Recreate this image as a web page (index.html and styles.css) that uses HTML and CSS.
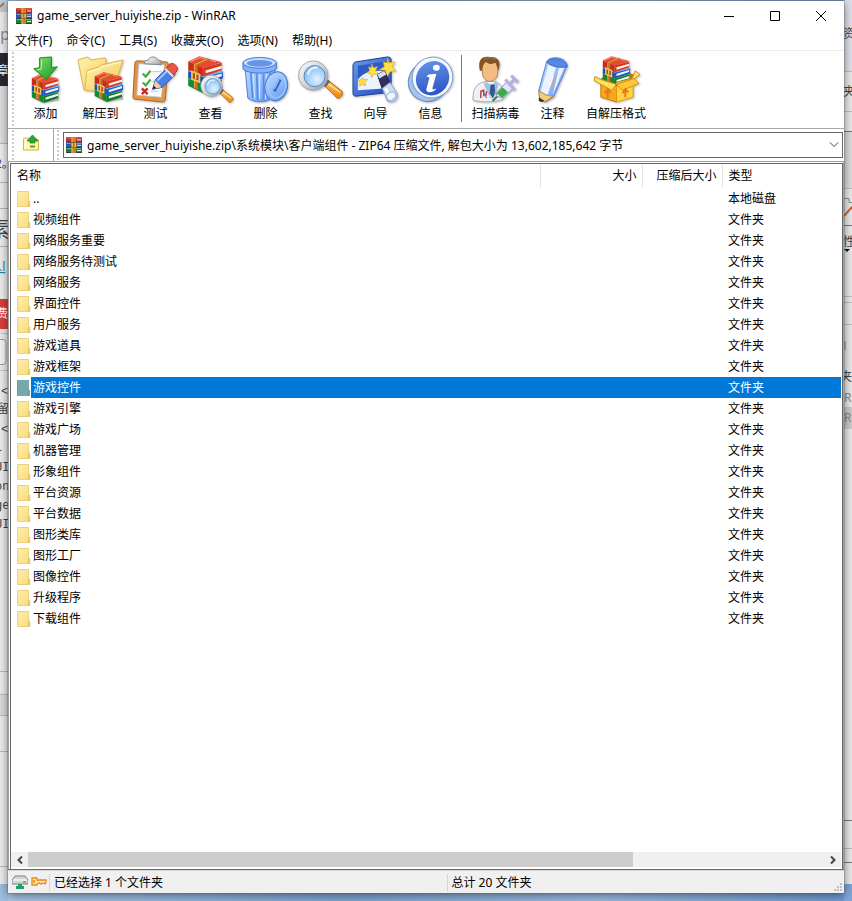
FILE: index.html
```html
<!DOCTYPE html>
<html lang="zh-CN">
<head>
<meta charset="utf-8">
<title>game_server_huiyishe.zip - WinRAR</title>
<link rel="stylesheet" href="styles.css">
</head>
<body>
<svg class="defs" aria-hidden="true">
  <defs>
    <linearGradient id="gBlue" x1="0" y1="0" x2="1" y2="1"><stop offset="0" stop-color="#c3dcff"/><stop offset=".5" stop-color="#8fbcfd"/><stop offset="1" stop-color="#5f90f0"/></linearGradient>
    <linearGradient id="gDeep" x1="0" y1="0" x2="1" y2="1"><stop offset="0" stop-color="#6c9bf0"/><stop offset="1" stop-color="#2148bb"/></linearGradient>
    <linearGradient id="gYellow" x1="0" y1="0" x2="1" y2="1"><stop offset="0" stop-color="#fff3ae"/><stop offset="1" stop-color="#f5c95a"/></linearGradient>
    <linearGradient id="gGreen" x1="0" y1="0" x2="1" y2="1"><stop offset="0" stop-color="#8ae66c"/><stop offset="1" stop-color="#149320"/></linearGradient>
    <linearGradient id="gOrange" x1="0" y1="0" x2="0" y2="1"><stop offset="0" stop-color="#ffc05a"/><stop offset="1" stop-color="#f08410"/></linearGradient>
    <linearGradient id="gSteel" x1="0" y1="0" x2="1" y2="1"><stop offset="0" stop-color="#ffffff"/><stop offset=".5" stop-color="#d3d5da"/><stop offset="1" stop-color="#94989e"/></linearGradient>
    <radialGradient id="gLens" cx=".6" cy=".65" r=".7"><stop offset="0" stop-color="#e0f3ff"/><stop offset="1" stop-color="#7cb8f0"/></radialGradient>
    <linearGradient id="gFolder" x1="0" y1="0" x2="1" y2="1"><stop offset="0" stop-color="#fdedb0"/><stop offset="1" stop-color="#fbdc74"/></linearGradient>
  </defs>

  <symbol id="winrar" viewBox="0 0 16 16">
    <rect x="0" y="0" width="16" height="5.4" rx="1" fill="#c2301f"/><path d="M1 1h14" stroke="#f06a58"/><path d="M11 3h4" stroke="#f8e8e4"/>
    <rect x="0" y="5.3" width="16" height="5.4" rx="1" fill="#2a55b8"/><path d="M1 6.3h14" stroke="#84b1f2"/><path d="M11 8.3h4" stroke="#e7efff"/>
    <rect x="0" y="10.6" width="16" height="5.4" rx="1" fill="#1b7d2d"/><path d="M1 11.6h14" stroke="#6fd36d"/><path d="M11 13.6h4" stroke="#e9ffe9"/>
    <path d="M0 5h16M0 10.5h16M0 15.6h16" stroke="#29224a" stroke-width=".8"/>
    <rect x="5.5" y="0" width="4.5" height="16" fill="#d9772a"/><path d="M6 0v16" stroke="#f4b36d"/>
    <rect x="5" y="5.6" width="5.6" height="4.6" fill="#e9c24b" stroke="#77511a" stroke-width=".8"/><path d="M7.8 6v3.4" stroke="#77511a"/>
  </symbol>

  <symbol id="stack" viewBox="0 0 30 30">
    <path d="M2 23l11 6 16-5v4l-16 2z" fill="#000" opacity=".18"/>
    <path d="M1 17l12 5v8L1 24z" fill="#128a34"/><path d="M13 22l15-4v7l-15 5z" fill="#0e7d2b"/><path d="M15 24.4l13-4v2.2l-13 4z" fill="#f4f4ee"/><path d="M1 17.6l12 5 15-4" fill="none" stroke="#5ad569"/>
    <path d="M1 11l12 5v7L1 17.6z" fill="#1c4cb0"/><path d="M13 16l16-4v6l-16 5z" fill="#2456c3"/><path d="M15 18l13-3.8v2.2l-13 4z" fill="#edf3ff"/><path d="M1 11.6l12 5 16-4" fill="none" stroke="#86b8fa"/>
    <path d="M1 4.5l12 5v7L1 11.3z" fill="#c92c1b"/><path d="M13 9.5l15-4v6l-15 5z" fill="#d43823"/><path d="M15 11.6l13-3.8v2.2l-13 4z" fill="#fbf3ec"/>
    <path d="M1 4.5L10 .3l18 4.8-15 4.8z" fill="#e64a33"/><path d="M3 4.4L10.3 1.2l13 3.4" fill="none" stroke="#f99580" stroke-width=".9"/>
    <path d="M16 2l3.7 1L8.8 8v19.6l-3.4-1.8V6.3z" fill="#c96a20"/><path d="M16.5 2.4L6.2 7v18.6" fill="none" stroke="#f2a95b" stroke-width=".8"/>
    <path d="M4 12.5l6 2.4v6l-6-2.4z" fill="#a5541a" stroke="#f5c753" stroke-width="1.4"/><path d="M7 14.500v4" stroke="#ffe79a"/>
  </symbol>

  <symbol id="folder" viewBox="0 0 14 16">
    <path d="M.5.5h11v12h1.200v3H.5z" fill="url(#gFolder)" stroke="#ecd27c"/><path d="M11.300 15.300v-4.100l1.500-1.200v5.300z" fill="#f8df86" stroke="#d6b65c" stroke-width=".6"/>
  </symbol>
  <symbol id="folder-sel" viewBox="0 0 14 16"><path d="M0 0h12v10h1v6H0z" fill="#76a9ae"/><path d="M.5 1v14M11.5 15v-5" stroke="#6898a9" fill="none"/></symbol>

  <symbol id="add" viewBox="0 0 48 48">
    <use href="#stack" x="9" y="18" width="30" height="30"/>
    <path d="M18 2l12-1v11l6-1-11 13-13-11 6-1z" fill="url(#gGreen)" stroke="#148a22"/><path d="M20 3.500l-.5 10-4 .5" fill="none" stroke="#b8f7a2"/>
  </symbol>
  <symbol id="extract" viewBox="0 0 48 48">
    <path d="M1 4l10-3 3 3 15-2 3 20-25 12z" fill="url(#gYellow)" stroke="#dfb348"/>
    <path d="M8 35l2-20 12-4 3-2 22-5-9 29-18 3z" fill="url(#gYellow)" stroke="#dfb348"/><path d="M10 17l13-4 3-2 19-5" fill="none" stroke="#fffbe0"/>
    <use href="#stack" x="17" y="16" width="31" height="31"/>
  </symbol>
  <symbol id="test" viewBox="0 0 48 48">
    <path d="M5 5l30 1c1 0 2 1 2 2l-3 36c0 2-1 3-3 3L3 44c-2 0-2-1-2-3L3 7c0-1 1-2 2-2z" fill="#e29643" stroke="#a8622a"/>
    <path d="M7 8l26 1-3 33-25-2z" fill="#fafcff" stroke="#b8c5d8" stroke-width=".7"/>
    <path d="M13 8V5l4-1c0-4 8-4 9 0l4 1v4z" fill="url(#gSteel)" stroke="#83888f"/>
    <path d="M11 18l3 3 5-6M11 27l3 3 5-6" fill="none" stroke="#46ad36" stroke-width="2.200"/><path d="M10 33l6 6m0-6l-6 6" stroke="#ce2a28" stroke-width="2.500"/>
    <path d="M21 16h9M20 26h5M19 36h8" stroke="#bac8dc"/>
    <path d="M21 34l3-10L37 11l7 8-13 13z" fill="#4a7ee8" stroke="#2b4ea8"/><path d="M26 25l12-12" stroke="#a3c5ff" stroke-width="2"/><path d="M21 34l3-9 6 7z" fill="#f5cda0"/><path d="M21 34l1-4 3 3z" fill="#222"/><path d="M35 13l4-5c3-2 9 3 7 7l-4 5z" fill="#ea5546" stroke="#b93025"/><path d="M34 13l8 8" stroke="#d7e2f3" stroke-width="2"/>
  </symbol>
  <symbol id="glass" viewBox="0 0 48 48">
    <path d="M27 29l5-4 14 11c2 3-2 8-5 7z" fill="url(#gOrange)" stroke="#b8691c"/><path d="M31 28l13 9" stroke="#ffe1a2" stroke-width="1.500"/><path d="M25 29l5-6 4 3-5 6z" fill="#62636b"/>
    <circle cx="16.500" cy="20" r="15" fill="url(#gSteel)" stroke="#a3a7ad"/><circle cx="18" cy="20.500" r="10.800" fill="url(#gLens)" stroke="#5e87b5"/><path d="M11 19c1-5 5-8 10-7" fill="none" stroke="#e9f7ff" stroke-width="2"/>
  </symbol>
  <symbol id="view" viewBox="0 0 48 48">
    <use href="#stack" x="0" y="0" width="38" height="38"/><use href="#glass" x="13" y="16" width="35" height="35"/>
  </symbol>
  <symbol id="bin" viewBox="0 0 48 48">
    <path d="M3 10l3 33c6 5 19 5 25 0l3-33z" fill="url(#gBlue)" stroke="#517edb"/>
    <path d="M9 17l2 26M15 18l1 27M22 18v27M29 17l-2 26" stroke="#5b89df" stroke-width="1.800"/><path d="M11 18l2 25M18 18v26M25 18l-1 26" stroke="#d7e8ff"/>
    <path d="M1 7v6c4 6 30 6 34 0V7z" fill="#83b0f8" stroke="#4374d4"/><ellipse cx="18" cy="7" rx="17" ry="5.500" fill="#c3dcff" stroke="#4374d4"/><ellipse cx="18" cy="7.500" rx="13" ry="3.500" fill="#6794e6"/>
    <ellipse cx="35" cy="31" rx="11.500" ry="15" transform="rotate(12 35 31)" fill="url(#gBlue)" stroke="#4374d4"/><ellipse cx="36" cy="31" rx="8.500" ry="12" transform="rotate(12 36 31)" fill="none" stroke="#aaccff"/><path d="M33 36l6-12" stroke="#3462bd" stroke-width="3"/><path d="M33 34l5-10" stroke="#b6d4ff"/>
  </symbol>
  <symbol id="wizard" viewBox="0 0 48 48">
    <path d="M4 6l32-5c3 0 4 1 4 4v32L4 41c-2 0-3-1-3-3V10c0-2 1-4 3-4z" fill="url(#gDeep)" stroke="#203e9b"/>
    <path d="M6 10l30-5v21L6 32z" fill="#2f5bc4"/><path d="M6 24c8-10 20-10 30-8v17L6 35z" fill="#e9f2ff"/>
    <path d="M36 2l2 5 6-1-3 5 4 4-6 1-3 5-2-6-6-1 5-3-1-5 4 1zM20 8l2 4 4-1-2 4 3 3-5 1-2 3-1-4-4-1 3-2-1-4 3 1zM11 22l1 2h4l-3 3 1 3-4-1-2 2v-4l-2-2 3-1z" fill="#ffdf47" stroke="#dba919" stroke-width=".7"/>
    <path d="M26 19l7-4 6 13-8 6z" fill="#34305b" stroke="#22203d"/><path d="M26 19l7-4 2 4-7 4z" fill="#cfe0f6"/><path d="M31 33l8-6 7 11c2 7-5 11-10 8z" fill="#c9dcf3" stroke="#8ea7cc"/><path d="M34 33l5 8" stroke="#fff" stroke-width="3"/><ellipse cx="40" cy="41" rx="5" ry="4" transform="rotate(-35 40 41)" fill="#edf7ff" stroke="#86a6ce"/>
  </symbol>
  <symbol id="info" viewBox="0 0 48 48">
    <ellipse cx="22" cy="26" rx="21" ry="20" transform="rotate(-35 22 26)" fill="#a3c2ec" stroke="#6288bd"/><ellipse cx="26" cy="22" rx="20.500" ry="21" transform="rotate(35 26 22)" fill="#f4f8ff" stroke="#7ba0d6"/><ellipse cx="26.500" cy="22.500" rx="16.500" ry="18" transform="rotate(35 26 22)" fill="url(#gDeep)"/>
    <ellipse cx="30" cy="12" rx="3.500" ry="3" fill="#fff"/><path d="M22 19l8-1-4 15c0 2 2 1 4 0-2 5-12 6-10 0l3-11-3-1z" fill="#fff"/>
  </symbol>
  <symbol id="virus" viewBox="0 0 48 48">
    <path d="M1 45c0-11 2-16 12-19h10c8 3 10 9 9 18-6 3-23 4-31 1z" fill="#edf0f5" stroke="#a6afba"/><path d="M14 26l6 4 4-4 3 4-6 14-8-13z" fill="#9ac5e8"/><path d="M19 29h4l1 10-3 4-3-5z" fill="#345891"/><path d="M12 27l7 16M27 28l-5 15" stroke="#b0b6c3"/>
    <path d="M10 8c1-8 16-9 17 1l-1 10c-2 8-12 10-15 1z" fill="#f3bc83" stroke="#a46830" stroke-width=".7"/><path d="M8 15C5 1 13 0 18 1c10-1 12 6 9 14l-3-8c-4 2-7 1-10-1-2 2-3 4-4 9z" fill="#845428"/><path d="M12 4c4-3 8-3 12 0" stroke="#ae7640" fill="none"/>
    <path d="M9 43v-7l3-1v6M14 41l1-5" stroke="#bd3944" fill="none" stroke-width="1.500"/><path d="M11 36l4 7" stroke="#4065b6"/>
    <path d="M21 46l8-8" stroke="#48714e" stroke-width="2"/><path d="M25 37l11-11 6 7-10 10-7-2z" fill="#e3e4f7" stroke="#9094bb"/><path d="M25 38l6-6 6 5-6 6z" fill="#3bad43"/><path d="M34 24l10 11M39 28l5-5M40 20l7 7" stroke="#b5aee0" stroke-width="3"/>
  </symbol>
  <symbol id="comment" viewBox="0 0 48 48">
    <path d="M10 35L18 6C21-1 39 1 39 10L25 42l-8 5-6-4z" fill="url(#gBlue)" stroke="#5c82cf"/><path d="M20 8l8 2-9 30-7-4zM31 11l5 1-12 28" fill="#eaf3ff"/><path d="M18 6c5-6 20-3 21 5-5 1-16 1-21-5z" fill="#5689e6" stroke="#3a66c4"/><path d="M27 20l-4 13" stroke="#aeb0ba" stroke-width="3"/><path d="M25 20l-4 12" stroke="#fff"/><path d="M10 35c4 4 9 6 15 6l-9 6-5-3z" fill="#f4ce78" stroke="#c28c35"/><path d="M10 42l6 4-3 1-3-1z" fill="#333"/>
  </symbol>
  <symbol id="sfx" viewBox="0 0 48 48">
    <path d="M8 23l12-8 23 4-3 9-22 4z" fill="#bb7415"/><use href="#stack" x="9" y="0" width="30" height="30"/>
    <path d="M8 24l16 7v16L8 42z" fill="#f4aa1b" stroke="#c57c0d"/><path d="M24 31l17-6v17l-17 5z" fill="#ffd441" stroke="#d8961a"/><path d="M8 24l16 5-5 6L1 25l1-4zM24 29l17-5 7-5-5-4-3 8-16 4z" fill="#ffe25c" stroke="#d28f18"/><path d="M24 29l18-6 5 5-17 7z" fill="#ffc638" stroke="#d28f18"/><path d="M15 43v-8m-3 3l3-4 3 4M33 42v-7m-3 3l3-4 3 3" stroke="#ef731b" stroke-width="2" fill="none"/>
  </symbol>
</svg>

<div class="desktop">
  <svg class="edge" aria-hidden="true">
    <rect width="8" height="901" fill="#ececee"/><rect y="0" width="8" height="12" fill="#b6cfd8"/><path d="M0 7l4-4" stroke="#d66b3b" stroke-width="2"/>
    <text x="0" y="40" class="edge-mid edge-grey">p</text>
    <rect y="53" width="8" height="33" fill="#292a31"/><text x="-3" y="75" class="edge-white">章</text>
    <rect y="86" width="8" height="57" fill="#dedee0"/><path d="M0 143.500h8M0 182.500h8M0 208.500h8M0 246.500h8" stroke="#b5b5b5"/>
    <text x="-5" y="168">2。</text><text x="-12" y="237" class="edge-big">素</text><text x="-1" y="271" class="edge-link">.l</text>
    <rect y="299" width="8" height="30" fill="#d94037"/><text x="-4" y="318" class="edge-white">费</text>
    <path d="M0 339.500h3q3 0 3 3v19q0 3-3 3H0" fill="#f3f3f3" stroke="#9a9aa2"/><path d="M0 333.500h8M0 370.500h8" stroke="#c7c7c7"/>
    <text x="1" y="395" class="edge-code">&lt;</text><text x="-3" y="413">留</text><text x="1" y="433" class="edge-code">&lt;</text><text x="-4" y="454" class="edge-code">-</text><text x="-5" y="471" class="edge-code">UI</text><text x="-5" y="490" class="edge-code">on</text><text x="-5" y="509" class="edge-code">ge</text><text x="-5" y="528" class="edge-code">UI</text>
    <rect y="694" width="8" height="21" fill="#dcdcdc"/><path d="M0 671.500h8M0 694.500h8M0 715.500h8M0 751.500h8M0 866.500h8" stroke="#b9b9b9"/><rect y="884" width="8" height="17" fill="#9dbce0"/>
  </svg>

  <main class="window">
    <header class="titlebar">
      <svg class="icon16"><use href="#winrar"/></svg>
      <h1>game_server_huiyishe.zip - WinRAR</h1>
      <button class="winbtn" aria-label="最小化"><svg viewBox="0 0 10 10"><path d="M0 5.500h10"/></svg></button>
      <button class="winbtn" aria-label="最大化"><svg viewBox="0 0 10 10"><path d="M.5.5h9v9h-9z"/></svg></button>
      <button class="winbtn" aria-label="关闭"><svg viewBox="0 0 10 10"><path d="M0 0l10 10M10 0L0 10"/></svg></button>
    </header>
    <nav class="menu">
      <button>文件(F)</button><button>命令(C)</button><button>工具(S)</button><button>收藏夹(O)</button><button>选项(N)</button><button>帮助(H)</button>
    </nav>
    <div class="toolbar">
      <span class="grip"></span>
      <button class="tool"><svg><use href="#add"/></svg>添加</button>
      <button class="tool"><svg><use href="#extract"/></svg>解压到</button>
      <button class="tool"><svg><use href="#test"/></svg>测试</button>
      <button class="tool"><svg><use href="#view"/></svg>查看</button>
      <button class="tool"><svg><use href="#bin"/></svg>删除</button>
      <button class="tool"><svg><use href="#glass"/></svg>查找</button>
      <button class="tool"><svg><use href="#wizard"/></svg>向导</button>
      <button class="tool"><svg><use href="#info"/></svg>信息</button>
      <span class="divider"></span>
      <button class="tool tool-mid"><svg><use href="#virus"/></svg>扫描病毒</button>
      <button class="tool"><svg><use href="#comment"/></svg>注释</button>
      <button class="tool tool-wide"><svg><use href="#sfx"/></svg>自解压格式</button>
    </div>
    <div class="address">
      <span class="grip"></span>
      <button class="up" aria-label="上一级"><svg viewBox="0 0 18 18"><path d="M1.500 16V5l1-1h4l1 1h8l1 1v10z" fill="#fff6ae" stroke="#d5b340"/><path d="M3 15V7h12" stroke="#fffde3" fill="none"/><path d="M10.500 1L5 7h3v2h5V7h3z" fill="#31a333" stroke="#187622" stroke-width=".7"/><path d="M8 12.500h5" stroke="#5c9c3a" stroke-width="2"/></svg></button>
      <span class="grip"></span>
      <div class="combo">
        <svg class="icon16"><use href="#winrar"/></svg>
        <select aria-label="路径"><option>game_server_huiyishe.zip\系统模块\客户端组件 - ZIP64 压缩文件, 解包大小为 13,602,185,642 字节</option></select>
        <svg class="chev" viewBox="0 0 10 6"><path d="M1 .5l4 4 4-4"/></svg>
      </div>
    </div>
    <section class="panel">
      <div class="list">
      <table>
        <colgroup><col><col class="c-size"><col class="c-packed"><col class="c-type"></colgroup>
        <thead><tr><th>名称</th><th class="num">大小</th><th class="num">压缩后大小</th><th>类型</th></tr></thead>
        <tbody>
          <tr><td><svg><use href="#folder"/></svg>..</td><td></td><td></td><td>本地磁盘</td></tr>
          <tr><td><svg><use href="#folder"/></svg>视频组件</td><td></td><td></td><td>文件夹</td></tr>
          <tr><td><svg><use href="#folder"/></svg>网络服务重要</td><td></td><td></td><td>文件夹</td></tr>
          <tr><td><svg><use href="#folder"/></svg>网络服务待测试</td><td></td><td></td><td>文件夹</td></tr>
          <tr><td><svg><use href="#folder"/></svg>网络服务</td><td></td><td></td><td>文件夹</td></tr>
          <tr><td><svg><use href="#folder"/></svg>界面控件</td><td></td><td></td><td>文件夹</td></tr>
          <tr><td><svg><use href="#folder"/></svg>用户服务</td><td></td><td></td><td>文件夹</td></tr>
          <tr><td><svg><use href="#folder"/></svg>游戏道具</td><td></td><td></td><td>文件夹</td></tr>
          <tr><td><svg><use href="#folder"/></svg>游戏框架</td><td></td><td></td><td>文件夹</td></tr>
          <tr class="selected"><td><svg><use href="#folder-sel"/></svg>游戏控件</td><td></td><td></td><td>文件夹</td></tr>
          <tr><td><svg><use href="#folder"/></svg>游戏引擎</td><td></td><td></td><td>文件夹</td></tr>
          <tr><td><svg><use href="#folder"/></svg>游戏广场</td><td></td><td></td><td>文件夹</td></tr>
          <tr><td><svg><use href="#folder"/></svg>机器管理</td><td></td><td></td><td>文件夹</td></tr>
          <tr><td><svg><use href="#folder"/></svg>形象组件</td><td></td><td></td><td>文件夹</td></tr>
          <tr><td><svg><use href="#folder"/></svg>平台资源</td><td></td><td></td><td>文件夹</td></tr>
          <tr><td><svg><use href="#folder"/></svg>平台数据</td><td></td><td></td><td>文件夹</td></tr>
          <tr><td><svg><use href="#folder"/></svg>图形类库</td><td></td><td></td><td>文件夹</td></tr>
          <tr><td><svg><use href="#folder"/></svg>图形工厂</td><td></td><td></td><td>文件夹</td></tr>
          <tr><td><svg><use href="#folder"/></svg>图像控件</td><td></td><td></td><td>文件夹</td></tr>
          <tr><td><svg><use href="#folder"/></svg>升级程序</td><td></td><td></td><td>文件夹</td></tr>
          <tr><td><svg><use href="#folder"/></svg>下载组件</td><td></td><td></td><td>文件夹</td></tr>
        </tbody>
      </table>
      <div class="scroll">
        <button aria-label="向左滚动"><svg viewBox="0 0 6 8"><path d="M5 .5L1.500 4 5 7.500"/></svg></button>
        <div class="track"><div class="thumb"></div></div>
        <button aria-label="向右滚动"><svg viewBox="0 0 6 8"><path d="M1 .5L4.500 4 1 7.500"/></svg></button>
      </div>
      </div>
    </section>
    <footer class="status">
      <div class="status-icons">
        <svg viewBox="0 0 16 14"><path d="M3 1h10l3 4v4H0V5z" fill="#d4d7d9" stroke="#7b8184"/><path d="M1 5h14" stroke="#fff"/><path d="M11 7h3" stroke="#39ba4b" stroke-width="1.500"/><path d="M6 9h4v2h2v3H4v-3h2z" fill="#22a06a"/></svg>
        <svg viewBox="0 0 16 14"><path d="M1 3h5v2h9v2l-1 2-2-1-2 1-2-1-2 1v1H1z" fill="#ffe0a0" stroke="#e48a1b" stroke-width="1.300"/><path d="M3 5v3" stroke="#e48a1b" stroke-width="1.500"/></svg>
      </div>
      <p>已经选择 1 个文件夹</p>
      <p>总计 20 文件夹</p>
      <svg class="sizer" viewBox="0 0 9 9"><path d="M6 0h2v2H6zM3 3h2v2H3zM6 3h2v2H6zM0 6h2v2H0zM3 6h2v2H3zM6 6h2v2H6z" fill="#bfbfbf"/></svg>
    </footer>
  </main>

  <svg class="edge" aria-hidden="true">
    <rect width="8" height="901" fill="#e9e9ea"/><rect width="8" height="71" fill="#dfe0ea"/><rect y="131" width="8" height="57" fill="#dcdcdc"/>
    <text x="-1" y="38">资</text><text x="-1" y="96">夹</text><path d="M0 71.500h8M0 111.500h8M0 188.500h8M0 296.500h8M0 302.500h8M0 324.500h8" stroke="#bfbfc2"/><path d="M0 131.500h8M0 225.500h8" stroke="#77777b"/>
    <path d="M0 198.500h5v4h3" fill="none" stroke="#8b8b8e"/><path d="M0 216l8-9" stroke="#d9612c" stroke-width="2"/><text x="-1" y="246">性</text><path d="M0 249h6l-3 3z" fill="#111"/>
    <path d="M1 341v9" stroke="#6580a5"/><text x="-4" y="381">夹</text><text x="0" y="402" class="edge-grey">R</text><rect y="407" width="8" height="22" fill="#cbcbcc"/><text x="0" y="422" class="edge-grey">R</text>
    <path d="M0 820.500h8" stroke="#777"/><path d="M0 848.500h8" stroke="#bbb"/><path d="M0 862.500h8" stroke="#777"/><rect y="884" width="8" height="17" fill="#7ea5d6"/>
  </svg>
</div>
</body>
</html>
```
FILE: styles.css
```css
* { box-sizing: border-box; }
body {
  margin: 0;
  background: linear-gradient(90deg, #a9c6e4, #7ea3d2 40%, #9dbbe0 70%, #6f98d0);
  color: #000;
  font: 12px/16px "Noto Sans", "Noto Sans CJK SC", sans-serif;
}
h1, p { margin: 0; font: inherit; }
button, select { margin: 0; padding: 0; border: 0; background: none; color: inherit; font: inherit; }
svg { display: block; flex: none; }
.defs { position: absolute; width: 0; height: 0; }
.icon16 { width: 16px; height: 16px; }

.desktop {
  display: grid;
  grid-template-columns: 8px minmax(0, 1fr) 8px;
  min-height: 100vh;
}
.edge { width: 8px; height: 100%; overflow: hidden; font-size: 12px; fill: #444; }
.edge-mid { font-size: 16px; }
.edge-big { font-size: 22px; }
.edge-grey { fill: #8a8a8e; }
.edge-white { fill: #fff; }
.edge-link { fill: #168aa0; text-decoration: underline; }
.edge-code { font-family: "Liberation Mono", monospace; }

.window {
  position: relative;
  display: flex;
  flex-direction: column;
  margin: 1px 0 8px;
  background: #fff;
  box-shadow: 0 0 0 1px rgba(90, 90, 90, .3), 0 2px 9px rgba(0, 0, 0, .5);
}

.titlebar { display: flex; align-items: center; height: 29px; padding-left: 8px; }
.titlebar h1 { flex: 1; margin-left: 5px; }
.winbtn { display: grid; place-items: center; width: 46px; height: 29px; }
.winbtn svg { width: 10px; height: 10px; fill: none; stroke: #000; }

.menu { display: flex; gap: 14px; height: 21px; padding: 3px 7px 1px; border-bottom: 1px solid #ededed; white-space: nowrap; }

.grip { flex: none; width: 2px; margin: 1px 0; background: repeating-linear-gradient(#cacaca 0 2px, transparent 2px 4px); }
.toolbar { display: flex; height: 78px; padding-left: 4px; border-bottom: 1px solid #a8a8a8; }
.toolbar .grip { margin-right: 4px; }
.tool { display: flex; flex-direction: column; align-items: center; gap: 3px; width: 55px; padding-top: 5px; white-space: nowrap; }
.tool svg { width: 47px; height: 47px; filter: drop-shadow(1px 1px 1px rgba(0, 0, 0, .25)); }
.tool-mid { width: 59px; }
.tool-wide { width: 72px; }
.divider { width: 1px; margin: 4px 4px 6px 3px; background: #777; }

.address { display: flex; height: 32px; padding-left: 4px; }
.up { display: flex; align-items: center; width: 40px; padding: 0 0 5px 8px; border-right: 1px solid #a8a8a8; margin-right: 3px; }
.up svg { width: 18px; height: 18px; }
.combo { display: flex; flex: 1; align-items: center; min-width: 0; height: 26px; margin: 3px 1px 0 4px; padding: 0 3px 0 2px; border: 1px solid #666; }
.combo select { flex: 1; min-width: 0; height: 24px; margin-left: 5px; padding-top: 1px; appearance: none; outline: none; }
.chev { width: 10px; height: 6px; fill: none; stroke: #444; }

.panel { display: flex; flex: 1; padding-left: 1px; border: 1px solid #a0a0a0; border-bottom-color: #696969; }
.list { display: flex; flex: 1; flex-direction: column; min-width: 0; margin: 1px 0 0; padding: 0 1px 2px 0; border: 1px solid #696969; border-width: 1px 1px 0; }
table { width: 100%; border-collapse: collapse; table-layout: fixed; }
.c-size { width: 102px; }
.c-packed { width: 80px; }
.c-type { width: 119px; }
th { height: 24px; padding: 0 6px; border-right: 1px solid #e3e3e3; font-weight: 400; text-align: left; white-space: nowrap; }
th.num { padding-right: 5px; text-align: right; }
th:last-child { border: 0; }
td { height: 21px; padding: 0 6px; white-space: nowrap; }
td svg { display: inline-block; width: 14px; height: 16px; margin-right: 2px; vertical-align: top; }
.selected td { background: #0078d7; color: #fff; }
.selected td:first-child { background: linear-gradient(90deg, #fff 20px, #0078d7 20px); }

.scroll { display: flex; height: 15px; margin-top: auto; background: #f0f0f0; }
.scroll button { display: grid; place-items: center; width: 17px; }
.scroll svg { width: 6px; height: 8px; fill: none; stroke: #444; stroke-width: 2px; }
.track { flex: 1; }
.thumb { width: 76%; height: 100%; background: #cdcdcd; }

.status { display: grid; grid-template-columns: 41px 1fr 1fr; align-items: center; height: 23px; border-top: 1px solid #d8d8d8; background: #f0f0f0; }
.status-icons { display: flex; gap: 3px; padding-left: 4px; }
.status-icons svg { width: 16px; height: 14px; }
.status p { padding: 1px 0 0 4px; border-left: 1px solid #d4d4d4; }
.sizer { position: absolute; right: 1px; bottom: 1px; width: 9px; height: 9px; }
```
